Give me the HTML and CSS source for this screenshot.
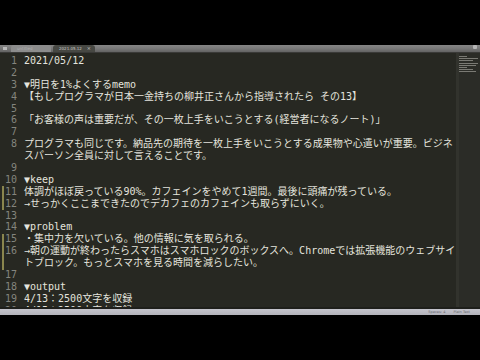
FILE: index.html
```html
<!DOCTYPE html>
<html lang="ja">
<head>
<meta charset="utf-8">
<link rel="stylesheet" href="styles.css">
</head>
<body>
<div class="screen">
  <div class="letterbox-top"></div>
  <div class="tabs">
    <div class="tab-icon"></div>
    <div class="tab">untitled</div>
    <div class="tab active"><span>2021.05.12</span><span class="x">×</span></div>
    <div class="tab-spacer"></div>
    <div class="tab-menu"></div>
  </div>
  <div class="editor">
    <div class="gutter-marks">
      <div class="mark m1"></div>
      <div class="mark m2"></div>
    </div>
    <div class="lines">
      <div class="row"><span class="ln">1</span><span class="tx">2021/05/12</span></div>
      <div class="row"><span class="ln">2</span><span class="tx"></span></div>
      <div class="row"><span class="ln">3</span><span class="tx">▼明日を1%よくするmemo</span></div>
      <div class="row"><span class="ln">4</span><span class="tx">【もしプログラマが日本一金持ちの柳井正さんから指導されたら その13】</span></div>
      <div class="row"><span class="ln">5</span><span class="tx"></span></div>
      <div class="row"><span class="ln">6</span><span class="tx">「お客様の声は重要だが、その一枚上手をいこうとする(経営者になるノート)」</span></div>
      <div class="row"><span class="ln">7</span><span class="tx"></span></div>
      <div class="row"><span class="ln">8</span><span class="tx">プログラマも同じです。納品先の期待を一枚上手をいこうとする成果物や心遣いが重要。ビジネ</span></div>
      <div class="row"><span class="ln"></span><span class="tx">スパーソン全員に対して言えることです。</span></div>
      <div class="row"><span class="ln">9</span><span class="tx"></span></div>
      <div class="row"><span class="ln">10</span><span class="tx">▼keep</span></div>
      <div class="row"><span class="ln">11</span><span class="tx">体調がほぼ戻っている90%。カフェインをやめて1週間。最後に頭痛が残っている。</span></div>
      <div class="row"><span class="ln">12</span><span class="tx">→せっかくここまできたのでデカフェのカフェインも取らずにいく。</span></div>
      <div class="row"><span class="ln">13</span><span class="tx"></span></div>
      <div class="row"><span class="ln">14</span><span class="tx">▼problem</span></div>
      <div class="row"><span class="ln">15</span><span class="tx">・集中力を欠いている。他の情報に気を取られる。</span></div>
      <div class="row"><span class="ln">16</span><span class="tx">→朝の運動が終わったらスマホはスマホロックのボックスへ。Chromeでは拡張機能のウェブサイ</span></div>
      <div class="row"><span class="ln"></span><span class="tx">トブロック。もっとスマホを見る時間を減らしたい。</span></div>
      <div class="row"><span class="ln">17</span><span class="tx"></span></div>
      <div class="row"><span class="ln">18</span><span class="tx">▼output</span></div>
      <div class="row"><span class="ln">19</span><span class="tx">4/13：2500文字を収録</span></div>
      <div class="row"><span class="ln">20</span><span class="tx">4/15：2500文字を収録</span></div>
    </div>
    <div class="minimap">
      <div class="mm w1"></div>
      <div class="mm w2"></div>
      <div class="mm w3"></div>
      <div class="mm w2"></div>
      <div class="mm w4"></div>
      <div class="mm w1"></div>
      <div class="mm w3"></div>
      <div class="mm w4"></div>
    </div>
  </div>
  <div class="status">
    <span class="st-spacer"></span>
    <span class="st">Spaces: 4</span>
    <span class="st">Plain Text</span>
  </div>
  <div class="letterbox-bottom"></div>
</div>
</body>
</html>
```
FILE: styles.css
```css
html, body {
  margin: 0;
  padding: 0;
  background: #000;
}
.screen {
  width: 480px;
  height: 360px;
  display: flex;
  flex-direction: column;
  overflow: hidden;
  background: #000;
}
.letterbox-top {
  height: 45px;
  flex: none;
  background: #000;
}
.tabs {
  height: 8px;
  flex: none;
  display: flex;
  align-items: flex-end;
  background: linear-gradient(#858585 0, #7a7a7a 45%, #636363 100%);
  border-bottom: 1px solid #3a3a38;
  box-sizing: border-box;
}
.tab-icon {
  width: 4px;
  height: 3px;
  margin: 0 4px 2px 3px;
  background: #b8b8b8;
}
.tab {
  height: 7px;
  width: 40px;
  margin-right: 2px;
  border-radius: 3px 3px 0 0;
  background: #8c8c8c;
  color: #b0b0b0;
  font: 4px "DejaVu Sans", sans-serif;
  line-height: 7px;
  padding-left: 6px;
  box-sizing: border-box;
  overflow: hidden;
}
.tab.active {
  width: 42px;
  background: #474843;
  color: #c8c8c8;
  display: flex;
  justify-content: space-between;
  padding-right: 4px;
}
.tab .x {
  font-size: 5px;
}
.tab-spacer {
  flex: 1;
}
.tab-menu {
  width: 4px;
  height: 4px;
  margin: 0 3px 3px 0;
  background: #b5b5b5;
  border-radius: 1px;
}
.editor {
  height: 256px;
  flex: none;
  display: flex;
  background: #272822;
  border-bottom: 2px solid #1e1f1b;
  box-sizing: border-box;
  position: relative;
  overflow: hidden;
}
.gutter-marks {
  position: absolute;
  left: 2px;
  top: 0;
  width: 2px;
  height: 100%;
}
.mark {
  position: absolute;
  left: 0;
  width: 2px;
  background: #8a864e;
}
.m1 { top: 133px; height: 24px; }
.m2 { top: 181px; height: 36px; }
.lines {
  flex: 1;
  padding-top: 2px;
  font-family: "DejaVu Sans Mono", "Noto Sans CJK JP", monospace;
  font-size: 10px;
  color: #e4e4de;
}
.row {
  display: flex;
  height: 11.9px;
  line-height: 11.9px;
  white-space: nowrap;
}
.ln {
  width: 17px;
  flex: none;
  text-align: right;
  margin-right: 7px;
  color: #84857e;
}
.tx {
  flex: 1;
}
.minimap {
  width: 24px;
  flex: none;
  display: flex;
  flex-direction: column;
  gap: 1.2px;
  padding: 3px 2px 0 3px;
  box-sizing: border-box;
  background: linear-gradient(90deg, #32332d 0 3px, #2b2c27 3px);
}
.mm {
  height: 1px;
  background: #7a7a74;
}
.w1 { width: 8px; }
.w2 { width: 19px; }
.w3 { width: 14px; }
.w4 { width: 17px; }
.status {
  height: 6px;
  flex: none;
  display: flex;
  align-items: center;
  background: linear-gradient(#c4c4cc, #b3b3bb);
  font: 3.5px "DejaVu Sans", sans-serif;
  color: #6a6a70;
  gap: 8px;
  padding-right: 10px;
}
.st-spacer {
  flex: 1;
}
.letterbox-bottom {
  flex: 1;
  background: #000;
}
```
